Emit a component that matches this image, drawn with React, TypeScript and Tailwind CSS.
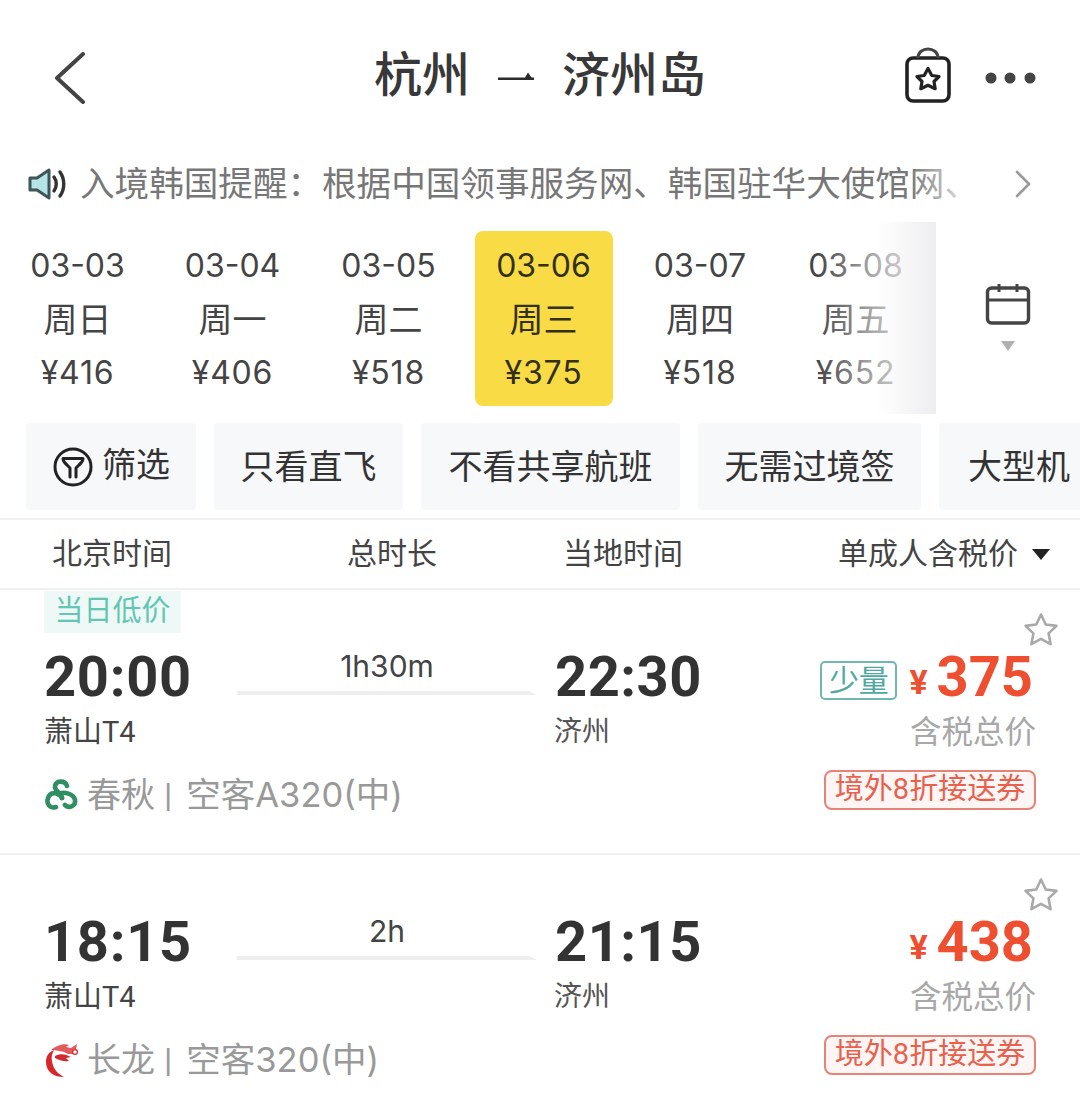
import React from 'react';

const dates = [
  { day: '03-03', week: '周日', price: '¥416', w: 'w-[155px]' },
  { day: '03-04', week: '周一', price: '¥406', w: 'w-[155px]' },
  { day: '03-05', week: '周二', price: '¥518', w: 'w-[157px]' },
  { day: '03-06', week: '周三', price: '¥375', w: 'w-[155px]', active: true },
  { day: '03-07', week: '周四', price: '¥518', w: 'w-[156px]' },
  { day: '03-08', week: '周五', price: '¥652', w: 'w-[155px]' },
];

const chips = [
  { label: '只看直飞', w: 'w-[189px]' },
  { label: '不看共享航班', w: 'w-[259px]' },
  { label: '无需过境签', w: 'w-[223px]' },
  { label: '大型机', w: 'w-[160px]' },
];

const Star = () => (
  <svg width="38" height="38" viewBox="0 0 38 38" fill="none" className="absolute right-[20px] top-[21px]">
    <path
      d="M19 3.5l4.7 10 10.8 1.4-7.9 7.5 2 10.8-9.6-5.3-9.6 5.3 2-10.8-7.9-7.5 10.8-1.4z"
      stroke="#a9a9a9"
      strokeWidth="2.6"
      strokeLinejoin="round"
    />
  </svg>
);

const SpringLogo = () => (
  <svg width="34" height="34" viewBox="0 0 34 34" fill="none" stroke="#2f8f62" strokeWidth="4.6" strokeLinecap="round">
    <path d="M23 8C21 2 11 2 11 9c0 5 7 5 7 11" />
    <path d="M18 20C14 13 6 14 4 20c-2 6 2 11 8 9" />
    <path d="M14 16c6-3 16 0 17 6 1 6-6 9-10 5" />
  </svg>
);

const DragonLogo = () => (
  <svg width="36" height="36" viewBox="0 0 36 36" fill="none">
    <path d="M20 35C9 35 2 29 2 20 2 14 5 10 10 8c-2 4-3 7-2 11 1 8 6 13 12 16z" fill="#d9262a" />
    <path d="M7 8c5-4 12-7 18-5l-3 2 5 1 6-4-1 5 2 2-3 3h-7l-4-2C16 9 12 8 7 8z" fill="#e25a5c" />
    <path d="M11 14c5-3 11-2 16 1l-5 1 3 3c-5 1-10-1-14-3z" fill="#cf2b30" />
    <circle cx="31" cy="10" r="2.4" fill="#fff" stroke="#d9262a" strokeWidth="1.2" />
  </svg>
);

type Flight = {
  from: string;
  to: string;
  span: string;
  airline: string;
  plane: string;
  price: string;
  logo: React.ReactNode;
  tag?: boolean;
  low?: boolean;
};

const flights: Flight[] = [
  { from: '20:00', to: '22:30', span: '1h30m', airline: '春秋', plane: '空客A320(中)', price: '375', logo: <SpringLogo />, tag: true, low: true },
  { from: '18:15', to: '21:15', span: '2h', airline: '长龙', plane: '空客320(中)', price: '438', logo: <DragonLogo /> },
];

const FlightRow = ({ f }: { f: Flight }) => (
  <div className="relative h-[265px] border-b-2 border-[#f0f0f0] pl-[44px] pr-[44px] pt-[56px]">
    {f.low && (
      <div className="absolute left-[44px] top-[1px] flex h-[42px] w-[137px] items-center justify-center bg-[#eef9f7] text-[29px] text-[#62c6b2]">
        当日低价
      </div>
    )}
    <Star />
    <div className="flex h-[62px] items-center">
      <div className="w-[193px] text-[56px] font-bold leading-none tracking-[0.7px] text-[#333]">{f.from}</div>
      <div className="w-[318px] pr-[18px]">
        <div className="-mt-[11px] text-center font-['Inter','Noto_Sans_CJK_SC',sans-serif] text-[30px] leading-[36px] text-[#444]">
          {f.span}
        </div>
        <svg width="300" height="5" viewBox="0 0 300 5" className="mt-[6px] block">
          <path d="M0 1h292l-6-3 14 7H0z" fill="#eeeeee" />
        </svg>
      </div>
      <div className="text-[56px] font-bold leading-none tracking-[0.5px] text-[#333]">{f.to}</div>
      <div className="ml-auto mr-[7px] flex items-center">
        {f.tag && (
          <div className="mr-[12px] mt-[7px] flex h-[39px] w-[77px] items-center justify-center rounded-[5px] border-2 border-[#6fb8b0] text-[30px] text-[#4fa9a0]">
            少量
          </div>
        )}
        <span className="mr-[9px] mt-[10px] text-[34px] font-bold leading-none text-[#ee4f30]">¥</span>
        <span className="mr-[-4px] text-[56px] font-bold leading-none text-[#ee4f30]">{f.price}</span>
      </div>
    </div>
    <div className="mt-[1px] flex h-[48px] items-center justify-between">
      <div className="flex">
        <div className="w-[510px] text-[29px] text-[#444]">萧山T4</div>
        <div className="text-[28px] text-[#555]">济州</div>
      </div>
      <div className="text-[31.5px] text-[#a8a8a8]">含税总价</div>
    </div>
    <div className="mt-[18px] flex h-[40px] items-center justify-between">
      <div className="flex items-center text-[34px] text-[#999]">
        <div className="flex w-[43px] items-center">{f.logo}</div>
        <span>{f.airline}</span>
        <span className="ml-[9px] mr-[14px] text-[34px] leading-none">|</span>
        <span className="font-['Inter','Noto_Sans_CJK_SC',sans-serif] text-[34.5px]">{f.plane}</span>
      </div>
      <div className="mb-[10px] flex h-[40px] w-[212px] items-center justify-center rounded-[8px] border-2 border-[#e58476] bg-[#fdf6f4] text-[29px] text-[#e9604c]">
        境外8折接送券
      </div>
    </div>
  </div>
);

export default function App() {
  return (
    <div className="h-[1118px] w-[1080px] overflow-hidden bg-white font-['Roboto','Noto_Sans_CJK_SC',sans-serif]">
      {/* top bar */}
      <div className="relative flex h-[155px] items-center justify-center pb-[3px]">
        <svg width="32" height="52" viewBox="0 0 32 52" fill="none" className="absolute left-[54px] top-[52px]">
          <path d="M29 2L3 26l26 24" stroke="#444" strokeWidth="4" strokeLinecap="round" strokeLinejoin="round" />
        </svg>
        <div className="flex items-center text-[48px] font-medium leading-none text-[#383838]">
          <span>杭州</span>
          <svg width="36" height="10" viewBox="0 0 36 10" className="mx-[28px]">
            <path d="M0 6.5h36V9H0zM27 6.5l3-5 3.500 5z" fill="#2b2b2b" />
          </svg>
          <span>济州岛</span>
        </div>
        <svg width="46" height="56" viewBox="0 0 46 56" fill="none" className="absolute left-[905px] top-[47px]">
          <rect x="2" y="11" width="42" height="43" rx="6" stroke="#222" strokeWidth="3.6" />
          <path d="M13 11c0-12 20-12 20 0" stroke="#444" strokeWidth="3" />
          <path d="M23 21.500l3.800 7 7.200 1-5 5 1.200 7.200-7.200-3.400-7.200 3.400 1.200-7.200-5-5 7.200-1z" stroke="#222" strokeWidth="3.200" strokeLinejoin="round" />
        </svg>
        <svg width="54" height="14" viewBox="0 0 54 14" className="absolute left-[983px] top-[71px]">
          <circle cx="8" cy="7" r="5.5" fill="#444" />
          <circle cx="27" cy="7" r="5.5" fill="#444" />
          <circle cx="47" cy="7" r="5.5" fill="#444" />
        </svg>
      </div>

      {/* notice */}
      <div className="flex h-[58px] items-center pl-[28px]">
        <svg width="41" height="36" viewBox="0 0 41 36" fill="none" className="shrink-0">
          <path d="M2 12h7L21 4v28L9 24H2z" fill="#b5e3e6" stroke="#3f5557" strokeWidth="3" strokeLinejoin="round" />
          <path d="M26 11c3 4 3 10 0 14M32 6c5 7 5 17 0 24" stroke="#333" strokeWidth="3.4" strokeLinecap="round" />
        </svg>
        <div className="relative ml-[11px] w-[900px] whitespace-nowrap text-[34.6px] leading-none text-[#777]">
          入境韩国提醒：根据中国领事服务网、韩国驻华大使馆网、
          <div className="absolute inset-y-0 right-0 w-[70px] bg-gradient-to-r from-transparent to-white" />
        </div>
        <svg width="16" height="28" viewBox="0 0 16 28" fill="none" className="ml-[35px] shrink-0">
          <path d="M2 2l12 12L2 26" stroke="#999" strokeWidth="2.6" strokeLinecap="round" strokeLinejoin="round" />
        </svg>
      </div>

      {/* dates */}
      <div className="mt-[9px] flex h-[192px]">
        <div className="relative flex w-[936px]">
          {dates.map((d) => (
            <div key={d.day} className={`${d.w} flex justify-center pt-[9px] ${d.active ? '-ml-[1px] mr-[1px]' : ''}`}>
              <div
                className={`flex h-[175px] w-[138px] flex-col items-center rounded-[8px] pt-[13px] ${d.active ? 'bg-[#f9dc45] text-[#33301a]' : 'text-[#444]'}`}
              >
                <div className="font-['Inter',sans-serif] text-[32px] leading-[44px]">{d.day}</div>
                <div className="mt-[10px] text-[34px] leading-[44px]">{d.week}</div>
                <div className="mt-[9px] font-['Inter',sans-serif] text-[32px] leading-[44px] tracking-[0.8px]">{d.price}</div>
              </div>
            </div>
          ))}
          <div className="absolute inset-y-0 right-0 w-[120px] bg-gradient-to-r from-transparent via-[#ffffff90] to-[#eeeef0]" />
        </div>
        <div className="flex flex-1 flex-col items-center pt-[61px]">
          <svg width="46" height="42" viewBox="0 0 46 42" fill="none">
            <rect x="2.5" y="5" width="41" height="35" rx="4" stroke="#444" strokeWidth="3.4" />
            <path d="M2.5 17h41M14 1v8M32 1v8" stroke="#444" strokeWidth="3" />
          </svg>
          <div className="mt-[16px] h-0 w-0 border-x-[7px] border-t-[10px] border-x-transparent border-t-[#b0b0b0]" />
        </div>
      </div>

      {/* filter chips */}
      <div className="mt-[9px] flex h-[87px] gap-[18px] overflow-hidden pl-[26px]">
        <div className="flex w-[170px] shrink-0 items-center justify-center rounded-[4px] bg-[#f7f8fa] text-[34px] leading-none text-[#333]">
          <svg width="42" height="42" viewBox="0 0 42 42" fill="none" className="mr-[8px]">
            <circle cx="21" cy="21" r="18" stroke="#222" strokeWidth="3" />
            <path d="M11 12.500h20c0 3-1 4-4 6.500l-3 3v9M11 12.500c0 3 1 4 4 6.500l3 3v9" stroke="#222" strokeWidth="3" strokeLinecap="round" strokeLinejoin="round" />
          </svg>
          <span className="-mt-[4px]">筛选</span>
        </div>
        {chips.map((c) => (
          <div
            key={c.label}
            className={`${c.w} flex shrink-0 items-center justify-center rounded-[4px] bg-[#f7f8fa] text-[34px] leading-none text-[#333]`}
          >
            {c.label}
          </div>
        ))}
      </div>

      {/* table head */}
      <div className="mt-[8px] flex h-[72px] items-center border-y-2 border-[#f0f0f0] pb-[2px] pl-[52px] text-[30px] text-[#444]">
        <div className="w-[295px]">北京时间</div>
        <div className="w-[216px]">总时长</div>
        <div className="w-[275px]">当地时间</div>
        <div>单成人含税价</div>
        <div className="ml-[14px] mt-[2px] h-0 w-0 border-x-[9px] border-t-[11px] border-x-transparent border-t-[#222]" />
      </div>

      {flights.map((f) => (
        <FlightRow key={f.from} f={f} />
      ))}
    </div>
  );
}
